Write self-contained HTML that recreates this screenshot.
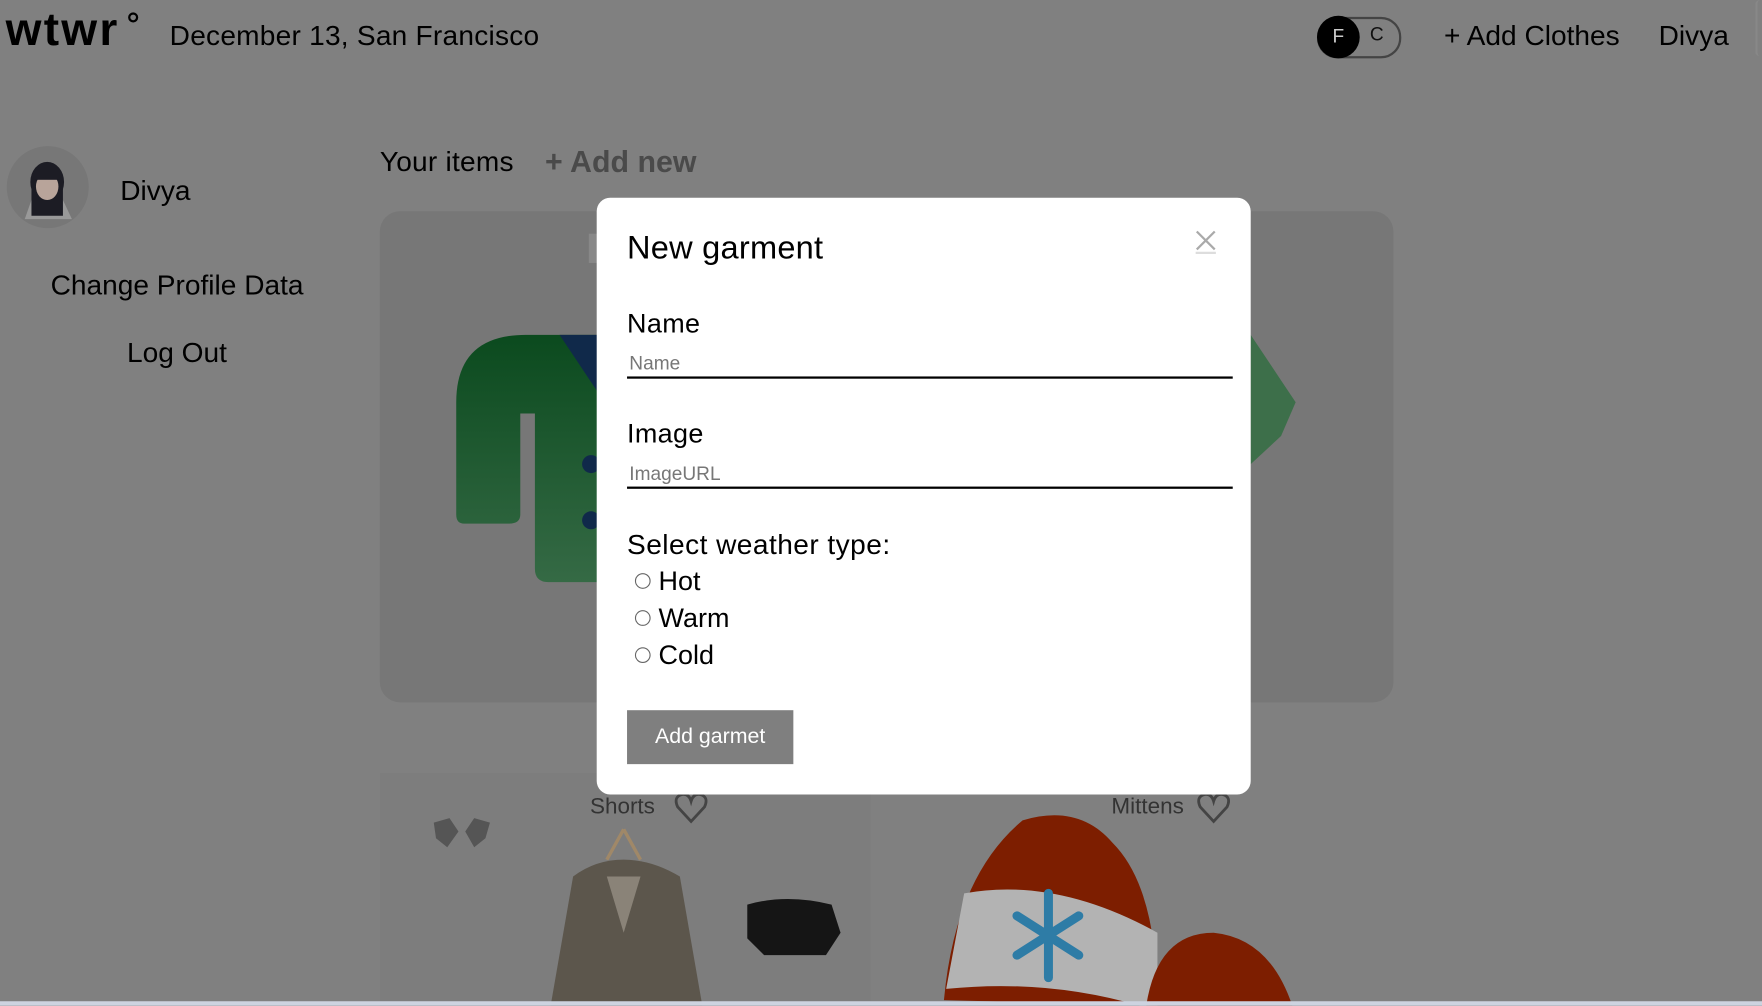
<!DOCTYPE html>
<html><head><meta charset="utf-8"><style>
html,body{margin:0;padding:0;width:1762px;height:1006px;overflow:hidden;background:#808080;}
#w{position:absolute;left:0;top:0;width:1568px;height:895px;transform:scale(1.12373);transform-origin:0 0;font-family:"Liberation Sans",sans-serif;color:#000;}
.a{position:absolute;white-space:nowrap;}
</style></head><body>
<div id="w">
<div class="a" style="left:5px;top:3px;font-size:41px;font-weight:900;letter-spacing:2px;">wtwr</div>
<div class="a" style="left:114px;top:11px;width:5px;height:5px;border:2px solid #000;border-radius:50%;"></div>
<div class="a" style="left:151px;top:18px;font-size:25px;letter-spacing:0.2px;">December 13, San Francisco</div>
<div class="a" style="left:1172px;top:15px;width:71px;height:33px;border:2px solid #444;border-radius:18px;"></div>
<div class="a" style="left:1172px;top:14px;width:38px;height:38px;background:#000;border-radius:50%;color:#ccc;font-size:17px;line-height:38px;text-align:center;">F</div>
<div class="a" style="left:1219px;top:21px;font-size:17px;color:#111;">C</div>
<div class="a" style="left:1285px;top:18px;font-size:25px;">+ Add Clothes</div>
<div class="a" style="left:1476px;top:18px;font-size:25px;">Divya</div>
<div class="a" style="left:1562px;top:0;width:6px;height:50px;border-left:2px solid #888;border-radius:8px;"></div>

<div class="a" style="left:6px;top:130px;width:73px;height:73px;border-radius:50%;background:#777;overflow:hidden;">
<svg width="73" height="73"><path d="M16 65 L22 48 L50 48 L58 65 Z" fill="#999"/><ellipse cx="36" cy="32" rx="15" ry="18" fill="#1c1c24"/><rect x="22" y="30" width="28" height="32" fill="#1c1c24"/><ellipse cx="36" cy="36" rx="10" ry="12" fill="#b8a49a"/><rect x="26" y="20" width="20" height="10" fill="#1c1c24"/></svg></div>
<div class="a" style="left:107px;top:156px;font-size:25px;">Divya</div>
<div class="a" style="left:45px;top:240px;font-size:25px;">Change Profile Data</div>
<div class="a" style="left:113px;top:300px;font-size:25px;">Log Out</div>

<div class="a" style="left:338px;top:130px;font-size:25px;letter-spacing:0.2px;">Your items</div>
<div class="a" style="left:485px;top:129px;font-size:27px;color:#4a4a4a;font-weight:bold;">+ Add new</div>

<div class="a" style="left:338px;top:188px;width:902px;height:437px;background:#777;border-radius:18px;overflow:hidden;">
<svg width="902" height="437" style="position:absolute;left:0;top:0">
<defs><linearGradient id="g" x1="0" y1="0" x2="0" y2="1"><stop offset="0" stop-color="#0b4a1e"/><stop offset="1" stop-color="#356a45"/></linearGradient></defs>
<path d="M68 170 Q68 110 130 110 L240 110 L240 330 L150 330 Q138 330 138 318 L138 180 L125 180 L125 270 Q125 278 115 278 L75 278 Q68 278 68 270 Z" fill="url(#g)"/>
<path d="M160 110 L200 110 L200 170 Z" fill="#10294a"/>
<path d="M775 110 L815 170 L802 200 L775 225 Z" fill="#3d6f4a"/>
<circle cx="188" cy="225" r="8" fill="#10294a"/><circle cx="188" cy="275" r="8" fill="#10294a"/>
</svg>
<div class="a" style="left:186px;top:20px;width:8px;height:26px;background:#888;"></div>
</div>

<div class="a" style="left:338px;top:688px;width:437px;height:207px;background:#7d7d7d;"></div>
<div class="a" style="left:525px;top:707px;font-size:20px;color:#333;">Shorts</div>
<svg class="a" style="left:600px;top:705px" width="30" height="28"><path d="M15 26 L3 13 Q-1 4 7 2 Q13 1 15 8 Q17 1 23 2 Q31 4 27 13 Z" fill="none" stroke="#444" stroke-width="2.5"/></svg>
<div class="a" style="left:989px;top:707px;font-size:20px;color:#333;">Mittens</div>
<svg class="a" style="left:1065px;top:705px" width="30" height="28"><path d="M15 26 L3 13 Q-1 4 7 2 Q13 1 15 8 Q17 1 23 2 Q31 4 27 13 Z" fill="none" stroke="#444" stroke-width="2.5"/></svg>
<svg class="a" style="left:380px;top:720px" width="800" height="175">
<path d="M6 12 L20 8 L28 20 L18 34 L8 26 Z M34 20 L42 8 L56 12 L52 26 L42 34 Z" fill="#555"/>
<path d="M175 18 L160 45 M175 18 L190 45" stroke="#a08868" stroke-width="3"/>
<path d="M130 60 Q150 45 175 45 Q200 45 225 60 L245 175 L110 175 Z" fill="#5c564c"/>
<path d="M160 60 L175 110 L190 60 Z" fill="#8a8378"/>
<path d="M285 85 Q320 75 360 85 L368 110 L355 130 L300 130 L285 115 Z" fill="#151515"/>
<path d="M460 170 Q470 60 530 10 Q580 -5 610 30 Q650 70 650 175 Z" fill="#7d1e00"/>
<path d="M478 75 Q560 60 650 110 L650 180 Q560 150 462 160 Z" fill="#b3b3b3"/>
<path d="M553 75 L553 150 M525 95 L580 130 M580 95 L525 130" stroke="#2e7ca6" stroke-width="8" stroke-linecap="round"/>
<path d="M640 175 Q650 110 700 110 Q750 115 770 175 Z" fill="#7d1e00"/>
</svg>

<div class="a" style="left:531px;top:176px;width:582px;height:531px;background:#fff;border-radius:12px;">
<div class="a" style="left:27px;top:29px;font-size:29px;letter-spacing:0.2px;">New garment</div>
<svg class="a" style="left:532px;top:28px" width="20" height="22"><path d="M2 2 L18 18 M18 2 L2 18" stroke="#aaa" stroke-width="2"/><path d="M1 21 H19" stroke="#ddd" stroke-width="2"/></svg>
<div class="a" style="left:27px;top:99px;font-size:24px;letter-spacing:0.3px;">Name</div>
<div class="a" style="left:29px;top:138px;font-size:17px;color:#777;">Name</div>
<div class="a" style="left:27px;top:159px;width:539px;height:2px;background:#000;"></div>
<div class="a" style="left:27px;top:197px;font-size:24px;letter-spacing:0.3px;">Image</div>
<div class="a" style="left:29px;top:236px;font-size:17px;color:#777;">ImageURL</div>
<div class="a" style="left:27px;top:257px;width:539px;height:1.5px;background:#000;"></div>
<div class="a" style="left:27px;top:295px;font-size:25px;letter-spacing:0.4px;">Select weather type:</div>
<div class="a" style="left:34px;top:334px;width:12px;height:12px;border:1.5px solid #666;border-radius:50%;"></div>
<div class="a" style="left:55px;top:328px;font-size:24px;">Hot</div>
<div class="a" style="left:34px;top:367px;width:12px;height:12px;border:1.5px solid #666;border-radius:50%;"></div>
<div class="a" style="left:55px;top:361px;font-size:24px;">Warm</div>
<div class="a" style="left:34px;top:400px;width:12px;height:12px;border:1.5px solid #666;border-radius:50%;"></div>
<div class="a" style="left:55px;top:394px;font-size:24px;">Cold</div>
<div class="a" style="left:27px;top:456px;width:148px;height:48px;background:#7f7f7f;color:#fff;font-size:19px;line-height:48px;text-align:center;">Add garmet</div>
</div>
<div class="a" style="left:0;top:891px;width:1568px;height:4px;background:#cdd3e0;"></div>
</div>
</body></html>
